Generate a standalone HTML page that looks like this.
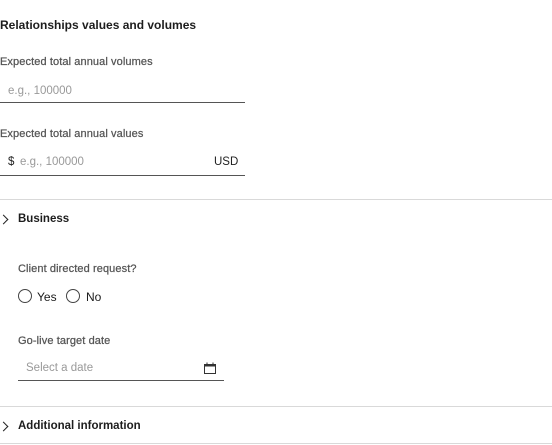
<!DOCTYPE html>
<html><head><style>
body{margin:0;width:552px;height:445px;background:#fff;font-family:"Liberation Sans",sans-serif;position:relative;overflow:hidden;color:#1a1a1a}
.a{position:absolute;white-space:nowrap;line-height:1}
.t{font-size:12px;font-weight:bold;color:#1d1d1d}
.l{font-size:11px;color:#555;letter-spacing:0.1px;-webkit-text-stroke:0.25px #555}
.p{font-size:11.5px;color:#999}
.line{position:absolute;height:1px;background:#555}
.div{position:absolute;left:0;width:552px;height:1px;background:#d9d9d9}
.rad{position:absolute;width:12px;height:12px;border:1px solid #444;border-radius:50%}
.chev{position:absolute;width:6px;height:6px;border-right:1.5px solid #222;border-top:1.5px solid #222;transform:rotate(45deg)}
</style></head><body>
<div class="a t" style="left:0;top:19px">Relationships values and volumes</div>
<div class="a l" style="left:0;top:57px">Expected total annual volumes</div>
<div class="a p" style="left:8px;top:86px">e.g., 100000</div>
<div class="line" style="left:0;top:102px;width:245px"></div>
<div class="a l" style="left:0;top:129px">Expected total annual values</div>
<div class="a" style="left:8px;top:157px;font-size:11.5px;color:#222">$</div>
<div class="a p" style="left:20px;top:157px">e.g., 100000</div>
<div class="a" style="left:214px;top:157px;font-size:11.5px;color:#222">USD</div>
<div class="line" style="left:0;top:175px;width:245px"></div>
<div class="div" style="top:199px"></div>
<div class="chev" style="left:0px;top:216px"></div>
<div class="a t" style="left:18px;top:214px;font-size:11.5px">Business</div>
<div class="a l" style="left:18px;top:264px">Client directed request?</div>
<div class="rad" style="left:18px;top:289px"></div>
<div class="a" style="left:37px;top:291px;font-size:12px">Yes</div>
<div class="rad" style="left:66px;top:289px"></div>
<div class="a" style="left:86px;top:291px;font-size:12px">No</div>
<div class="a l" style="left:18px;top:336px">Go-live target date</div>
<div class="a p" style="left:26px;top:363px">Select a date</div>
<svg style="position:absolute;left:204px;top:362px" width="13" height="12" viewBox="0 0 13 12"><rect x="0.5" y="2.5" width="11" height="9" fill="none" stroke="#333"/><rect x="0.5" y="2.5" width="11" height="2" fill="#333"/><rect x="2.5" y="0.5" width="1" height="2" fill="#333"/><rect x="8.5" y="0.5" width="1" height="2" fill="#333"/></svg>
<div class="line" style="left:18px;top:380px;width:206px"></div>
<div class="div" style="top:406px"></div>
<div class="chev" style="left:0px;top:423px"></div>
<div class="a t" style="left:18px;top:421px;font-size:11.5px">Additional information</div>
<div class="div" style="top:443px"></div>
</body></html>
